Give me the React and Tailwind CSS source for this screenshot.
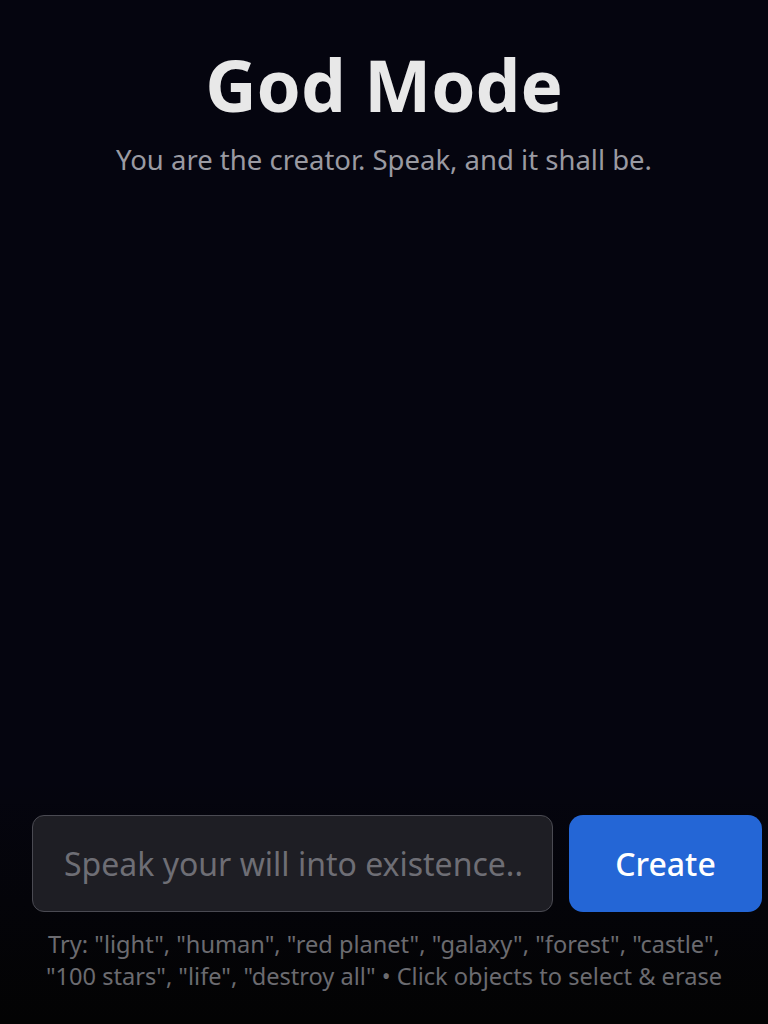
import React, { useState } from 'react';

const App = () => {
    const [prompt, setPrompt] = useState('');

    function handleSubmit(e) {
        e.preventDefault();
        setPrompt('');
    }

    return (
        <div
            className="flex flex-col h-screen w-full overflow-hidden bg-[#05050f] text-[#e8e8e8]"
            style={{ fontFamily: '"Noto Sans", "Open Sans", sans-serif' }}
        >
            <header className="flex flex-col items-center pt-[49px]">
                <h1 className="text-[71px] leading-[72px] font-bold text-[#e8e8e8]">God Mode</h1>
                <p className="mt-[21px] text-[27.5px] leading-[36px] text-[#9a9aa2]">
                    You are the creator. Speak, and it shall be.
                </p>
            </header>

            <div className="flex-1" />

            <div className="flex flex-col pt-[36px] pb-[32px] bg-gradient-to-b from-transparent to-[#030303]">
                <form onSubmit={handleSubmit} className="flex gap-4 pl-8">
                    <input
                        value={prompt}
                        onChange={(e) => setPrompt(e.target.value)}
                        type="text"
                        placeholder="Speak your will into existence..."
                        className="w-[521px] h-[97px] shrink-0 rounded-[12px] border-[1.5px] border-[#4a4a52] bg-[#1e1e24] pl-[31px] pr-[30px] text-[32px] text-[#e8e8e8] placeholder-[#6e6e75] outline-none"
                    />
                    <button
                        type="submit"
                        className="w-[193px] h-[97px] shrink-0 rounded-[14px] bg-[#2466d6] text-[32px] font-medium text-white"
                    >
                        Create
                    </button>
                </form>
                <p className="mx-auto mt-[16px] max-w-[700px] text-center text-[23.6px] leading-[32px] text-[#6b6b70]">
                    Try: "light", "human", "red planet", "galaxy", "forest", "castle", "100 stars", "life", "destroy all" • Click objects to select &amp; erase
                </p>
            </div>
        </div>
    );
};

export default App;
